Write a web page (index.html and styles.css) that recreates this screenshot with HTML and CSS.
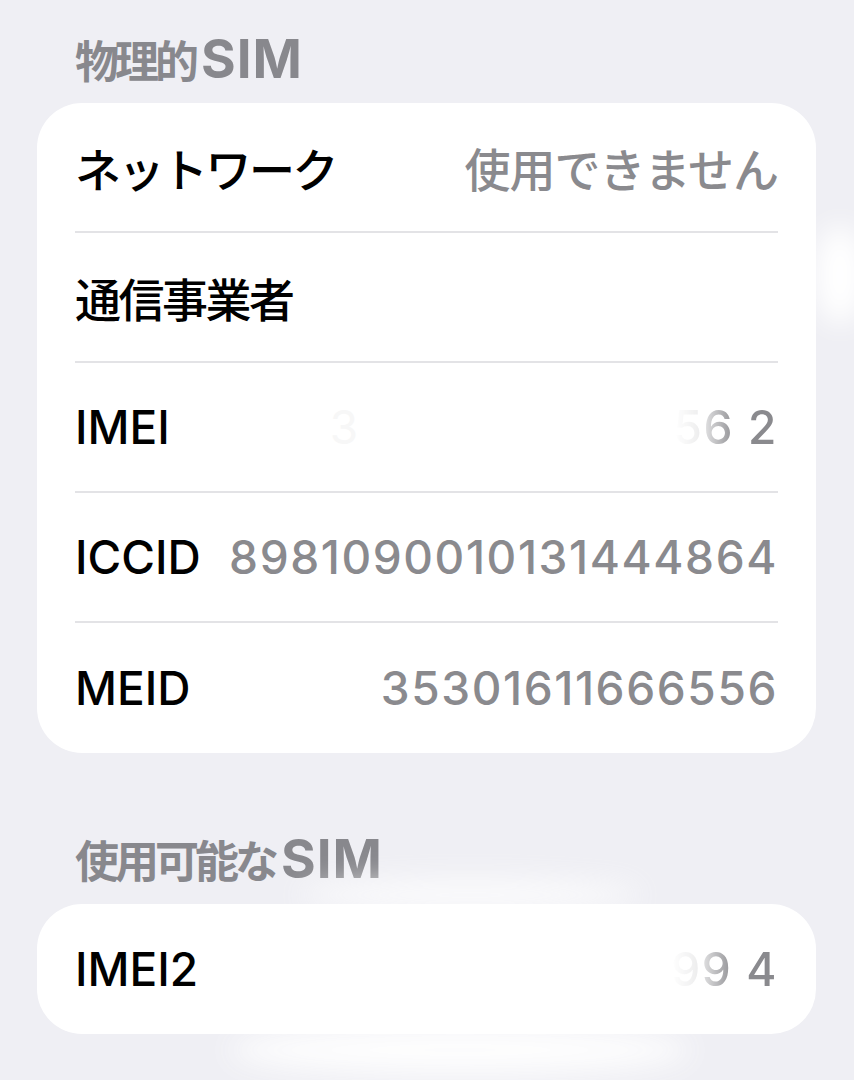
FILE: index.html
```html
<!DOCTYPE html>
<html lang="ja">
<head>
  <meta charset="UTF-8" />
  <meta name="viewport" content="width=device-width, initial-scale=1.0"/>
  <title>SIM</title>
  <link rel="stylesheet" href="styles.css">
</head>
<body>
  <div class="page">
    <h2 class="section-title"><span class="jp">物理的</span><span class="sim">SIM</span></h2>
    <div class="card">
      <div class="row">
        <span class="label jp">ネットワーク</span>
        <span class="value jp">使用できません</span>
      </div>
      <div class="row">
        <span class="label jp">通信事業者</span>
      </div>
      <div class="row">
        <span class="label">IMEI</span>
        <span class="ghost">3</span>
        <span class="value faded">56 2</span>
      </div>
      <div class="row">
        <span class="label">ICCID</span>
        <span class="value">8981090010131444864</span>
      </div>
      <div class="row">
        <span class="label">MEID</span>
        <span class="value">35301611666556</span>
      </div>
    </div>

    <h2 class="section-title second"><span class="jp">使用可能な</span><span class="sim">SIM</span></h2>
    <div class="card">
      <div class="row">
        <span class="label">IMEI2</span>
        <span class="value faded">99 4</span>
      </div>
    </div>
  </div>

  <!-- white smudges left by the redaction -->
  <div class="smear smear-right"></div>
  <div class="smear smear-top"></div>
  <div class="smear smear-bottom"></div>
</body>
</html>
```

FILE: styles.css
```css
body {
  margin: 0;
  background-color: #efeff4;
  font-family: Inter, "Noto Sans CJK JP", sans-serif;
  color: #000;
  position: relative;
  height: 1080px;
  overflow: hidden;
}

.page {
  padding: 0 38px 0 37px;
}

.section-title {
  margin: 36px 0 21px 38px;
  height: 46px;
  display: flex;
  align-items: center;
  font-weight: 700;
  color: #88888d;
  font-size: 44px;
}

.section-title .jp {
  font-family: "Noto Sans CJK JP", sans-serif;
  letter-spacing: -4px;
}

.section-title .sim {
  font-family: Inter, sans-serif;
  font-size: 53px;
  letter-spacing: 1px;
  margin-left: 6px;
}

.section-title.second {
  margin-top: 83px;
  margin-bottom: 22px;
}

.card {
  background: #fff;
  border-radius: 45px;
}

.row {
  box-sizing: border-box;
  height: 130px;
  margin: 0 38px;
  display: flex;
  align-items: center;
  border-bottom: 2px solid #e3e3e6;
  font-size: 46px;
}

.row:last-child {
  border-bottom: none;
}

.label {
  font-weight: 500;
}

.label.jp {
  font-family: "Noto Sans CJK JP", sans-serif;
  letter-spacing: -2.5px;
}

.value {
  margin-left: auto;
  color: #8a8a8e;
  font-weight: 500;
  letter-spacing: 1.6px;
  white-space: nowrap;
}

.value.jp {
  font-family: "Noto Sans CJK JP", sans-serif;
  letter-spacing: -1px;
}

.faded {
  -webkit-mask-image: linear-gradient(to right, transparent 0%, rgba(0,0,0,0.15) 25%, #000 60%);
  mask-image: linear-gradient(to right, transparent 0%, rgba(0,0,0,0.15) 25%, #000 60%);
}

.ghost {
  margin-left: 160px;
  color: #f7f7f7;
}

.smear {
  position: absolute;
  background: #fff;
  border-radius: 50%;
  filter: blur(14px);
}

.smear-right {
  left: 815px;
  top: 225px;
  width: 50px;
  height: 100px;
}

.smear-top {
  left: 300px;
  top: 880px;
  width: 340px;
  height: 30px;
  opacity: 0.8;
}

.smear-bottom {
  left: 230px;
  top: 1025px;
  width: 460px;
  height: 50px;
  opacity: 0.9;
}
```
